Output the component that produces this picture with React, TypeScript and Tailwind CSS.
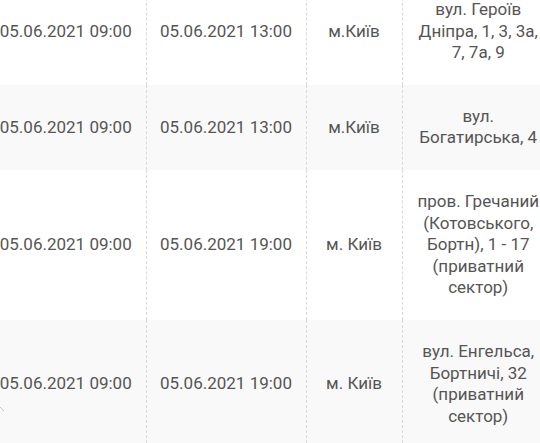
import React from "react";

const rows = [
  { from: "05.06.2021 09:00", to: "05.06.2021 13:00", city: "м.Київ", addr: ["вул. Героїв", "Дніпра, 1, 3, 3а,", "7, 7а, 9"] },
  { from: "05.06.2021 09:00", to: "05.06.2021 13:00", city: "м.Київ", addr: ["вул.", "Богатирська, 4"] },
  { from: "05.06.2021 09:00", to: "05.06.2021 19:00", city: "м. Київ", addr: ["пров. Гречаний", "(Котовського,", "Бортн), 1 - 17", "(приватний", "сектор)"] },
  { from: "05.06.2021 09:00", to: "05.06.2021 19:00", city: "м. Київ", addr: ["вул. Енгельса,", "Бортничі, 32", "(приватний", "сектор)"] },
];

export default function App() {
  return (
    <div className="relative w-[540px] h-[443px] overflow-hidden bg-white">
      <table
        className="table-fixed border-collapse -mt-[22px] -ml-[14px] w-[568px] text-[17px] leading-[21.6px] text-[#555555]"
        style={{ fontFamily: "Roboto, 'Noto Sans', sans-serif" }}
      >
        <colgroup>
          <col className="w-[160px]" />
          <col className="w-[160px]" />
          <col className="w-[96px]" />
          <col className="w-[152px]" />
        </colgroup>
        <tbody>
          {rows.map((r, i) => (
            <tr key={i} className={i % 2 === 1 ? "bg-[#f9f9f9]" : "bg-white"}>
              <td className="py-[21px] px-[8px] text-center align-middle border-r border-dashed border-[#d9d9d9] whitespace-nowrap">{r.from}</td>
              <td className="py-[21px] px-[8px] text-center align-middle border-r border-dashed border-[#d9d9d9] whitespace-nowrap">{r.to}</td>
              <td className="py-[21px] px-[8px] text-center align-middle border-r border-dashed border-[#d9d9d9] whitespace-nowrap">{r.city}</td>
              <td className="py-[21px] px-[8px] text-center align-middle">
                {r.addr.map((l, j) => (
                  <div key={j} className="whitespace-nowrap">{l}</div>
                ))}
              </td>
            </tr>
          ))}
        </tbody>
      </table>
      <svg className="absolute left-0 top-[406px]" width="6" height="7" viewBox="0 0 6 7">
        <path d="M0 1 L4 5" stroke="#c8c8c8" strokeWidth="1" fill="none" />
      </svg>
    </div>
  );
}
